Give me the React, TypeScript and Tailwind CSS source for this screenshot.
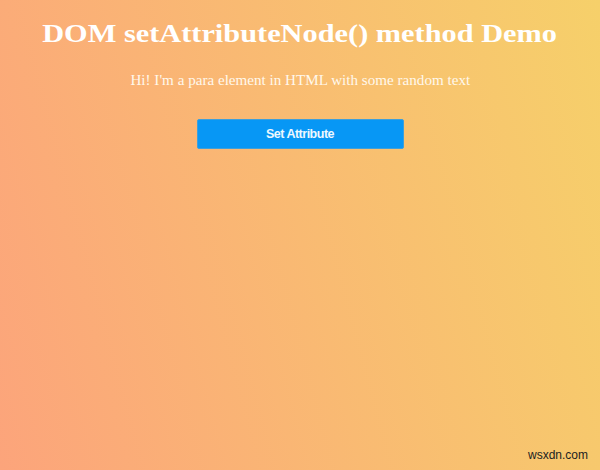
export default function App() {
  return (
    <div className="relative h-[470px] w-[600px] overflow-hidden bg-[linear-gradient(75deg,#fca47b_0%,#f6d06a_100%)]">
      <div className="flex flex-col items-center pt-[21px] text-center font-['Liberation_Serif',serif] text-white">
        <h1 className="scale-x-[1.167] whitespace-nowrap text-[26px] font-bold leading-[26px]">DOM setAttributeNode() method Demo</h1>
        <p className="mt-[27px] scale-x-[1.08] whitespace-nowrap text-[14px] leading-[14px] text-[#fff8ec]">Hi! I'm a para element in HTML with some random text</p>
        <button className="mt-[31px] flex h-[30px] w-[207px] items-center justify-center rounded-[2px] border border-[#3f9fd9] bg-[#0797f5] font-['Liberation_Sans',sans-serif] text-[12.5px] font-bold tracking-[-0.5px] text-[#eef8ff]">
          Set Attribute
        </button>
      </div>
      <div className="absolute bottom-[6px] right-[12px] font-['Liberation_Sans',sans-serif] text-[12px] text-[#222]">wsxdn.com</div>
    </div>
  );
}
